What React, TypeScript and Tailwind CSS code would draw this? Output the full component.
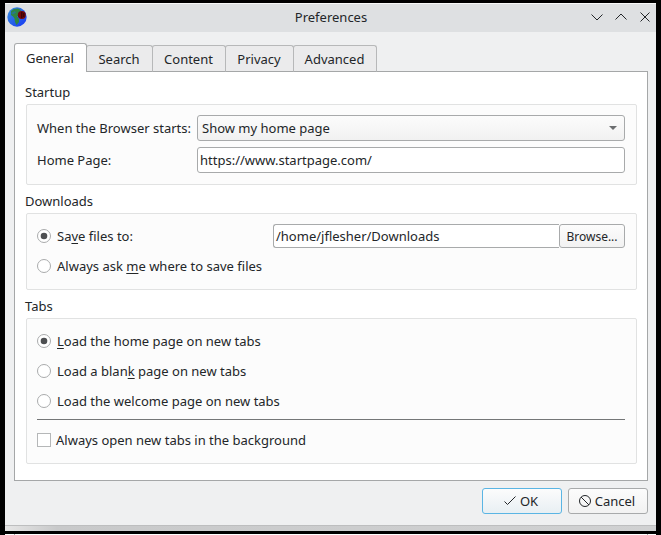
import type { ReactNode } from 'react';

const tabs = [
  { label: 'Search', width: 'w-[67px]' },
  { label: 'Content', width: 'w-[74px]' },
  { label: 'Privacy', width: 'w-[69px]' },
  { label: 'Advanced', width: 'w-[84px]' },
];

function Key({ children }: { children: string }) {
  return (
    <span className="underline decoration-[#232627] decoration-1 underline-offset-2 [text-decoration-skip-ink:none]">
      {children}
    </span>
  );
}

function Group({ title, height, gap, children }: { title: string; height: string; gap: string; children: ReactNode }) {
  return (
    <section className={gap}>
      <h2 className="-ml-px h-[22px] leading-5">{title}</h2>
      <div className={`${height} rounded-[2px] border border-[#e1e2e2] bg-[#fcfcfc] px-2.5`}>{children}</div>
    </section>
  );
}

function Radio({ checked, children }: { checked?: boolean; children: ReactNode }) {
  return (
    <label className="flex h-[30px] items-center">
      <svg className="mr-1.5 shrink-0" width="14" height="14" viewBox="0 0 14 14">
        <circle cx="7" cy="7" r="6.5" fill="#fff" stroke="#a9abac" />
        {checked && <circle cx="7" cy="7" r="3.3" fill="#4d4f51" />}
      </svg>
      <span>{children}</span>
    </label>
  );
}

function Globe() {
  return (
    <svg width="20" height="20" viewBox="0 0 20 20">
      <defs>
        <linearGradient id="sea" x1="0" y1="0" x2="1" y2="1">
          <stop offset="0" stopColor="#3791e0" />
          <stop offset="1" stopColor="#1636f4" />
        </linearGradient>
      </defs>
      <circle cx="10" cy="10" r="9.7" fill="url(#sea)" />
      <path d="M4 4 L7 2 L11 1.5 L14 3 L13 5 L11 6 L12 8 L10 9.5 L12 12 L12 15 L9.5 18 L8 15 L7.5 11.5 L6 9.5 L4 8 Z" fill="#2f8544" />
      <path d="M4 6 L8 4 L9 5.5 L6 7.5 Z" fill="#287a8a" />
      <circle cx="14.8" cy="8" r="4" fill="#76070b" />
      <path d="M14.8 5 V11 M16.8 6 V10" stroke="#320206" strokeWidth="1.2" />
    </svg>
  );
}

export default function App() {
  return (
    <div className="h-[535px] w-[661px] overflow-hidden bg-black pt-[3px] pr-[5px] pl-[5px] font-['Noto_Sans',sans-serif] text-[13px] leading-5 text-[#232629]">
      <div className="flex h-[528px] flex-col bg-[#eff0f1]">
        <header className="flex h-[29px] shrink-0 items-center border-t border-[#f8f8f8] bg-[#dee0e2] pb-0.5">
          <div className="ml-0.5 w-[72px]"><Globe /></div>
          <h1 className="flex-1 text-center">Preferences</h1>
          <div className="flex w-[73px] justify-end gap-3 pr-[5px]">
            <svg width="12" height="12" viewBox="0 0 12 12" fill="none" stroke="#232629"><path d="M.5 3.5 6 9l5.5-5.5" /></svg>
            <svg width="12" height="12" viewBox="0 0 12 12" fill="none" stroke="#232629"><path d="M.5 8.5 6 3l5.5 5.5" /></svg>
            <svg width="12" height="12" viewBox="0 0 12 12" fill="none" stroke="#232629"><path d="m1.5 1.5 9 9m0-9-9 9" /></svg>
          </div>
        </header>

        <main className="pt-[11px] pr-2 pl-[9px]">
          <nav className="relative z-10 -mb-px flex h-[29px] items-end">
            <button className="relative z-10 h-[29px] w-[73px] rounded-t-[3px] border border-b-0 border-[#a8aaab] bg-white pr-px">General</button>
            {tabs.map((tab) => (
              <button key={tab.label} className={`${tab.width} -ml-px h-[27px] rounded-t-[3px] border border-[#b7b8b9] border-b-[#a5a7a8] bg-[#ebebec] pt-px pr-px`}>
                {tab.label}
              </button>
            ))}
          </nav>
          <div className="h-[410px] border border-[#a5a7a8] bg-white pt-2.5 pr-2.5 pl-[11px]">
            <Group title="Startup" height="h-[81px]" gap="">
              <div className="mt-2.5 flex h-[26px] items-center">
                <span className="w-40">When the Browser starts:</span>
                <div className="flex h-[26px] flex-1 items-center justify-between rounded-[3px] border border-[#a8aaab] bg-linear-to-b from-[#fcfcfc] to-[#f1f1f1] pr-[7px] pl-1">
                  <span>Show my home page</span>
                  <svg width="8" height="4" viewBox="0 0 8 4"><path d="M0 0h8L4 4z" fill="#6b6d6f" /></svg>
                </div>
                <span className="w-px" />
              </div>
              <div className="mt-1.5 flex h-[26px] items-center">
                <span className="w-40">Home Page:</span>
                <div className="flex h-[26px] flex-1 items-center rounded-[3px] border border-[#a8aaab] bg-white pl-0.5">https://www.startpage.com/</div>
                <span className="w-px" />
              </div>
            </Group>

            <Group title="Downloads" height="h-[77px]" gap="mt-1.5">
              <div className="mt-[7px] flex h-[30px] items-center">
                <div className="w-[236px]"><Radio checked>Sa<Key>v</Key>e files to:</Radio></div>
                <div className="flex h-6 flex-1 items-center rounded-l-[3px] border border-r-0 border-[#a8aaab] bg-white pl-0.5">/home/jflesher/Downloads</div>
                <button className="mr-px h-6 w-[66px] rounded-[3px] border border-[#a8aaab] bg-linear-to-b from-[#fcfcfc] to-[#f2f2f2] pt-px text-[12px] leading-5">Browse...</button>
              </div>
              <Radio>Always ask <Key>m</Key>e where to save files</Radio>
            </Group>

            <Group title="Tabs" height="h-[146px]" gap="mt-1.5">
              <div className="pt-[7px]">
                <Radio checked><Key>L</Key>oad the home page on new tabs</Radio>
                <Radio>Load a blan<Key>k</Key> page on new tabs</Radio>
                <Radio>Load the welcome page on new tabs</Radio>
              </div>
              <hr className="mt-[3px] mr-px border-[#747677]" />
              <label className="mt-2.5 flex h-5 items-center">
                <span className="mr-[5px] size-3.5 border border-[#b5b7b8] bg-white" />
                <span>Always open new tabs in the background</span>
              </label>
            </Group>
          </div>
        </main>

        <footer className="mt-[7px] flex h-[26px] justify-end gap-1.5 pr-2">
          <button className="flex h-[26px] w-20 items-center justify-center gap-1 rounded-[3px] border border-[#5ab5e4] bg-linear-to-b from-[#fcfcfc] to-[#e8eff3] pr-0.5">
            <svg width="12" height="12" viewBox="0 0 12 12" fill="none" stroke="#232629"><path d="m.5 6.5 3 3 8-8" /></svg>
            <span>OK</span>
          </button>
          <button className="flex h-[26px] w-20 items-center justify-center gap-1 rounded-[3px] border border-[#a8aaab] bg-linear-to-b from-[#fcfcfc] to-[#f2f2f2] pr-0.5">
            <svg width="12" height="12" viewBox="0 0 12 12" fill="none" stroke="#232629"><circle cx="6" cy="6" r="5.5" /><path d="m2 2 8 8" /></svg>
            <span>Cancel</span>
          </button>
        </footer>
        <div className="mt-auto h-1.5 border-t border-[#bdbebf] bg-linear-to-r from-[#e6e6e6] via-[#c8c9ca] via-8% to-[#d0d1d2]" />
      </div>
      <div className="mt-[3px] flex h-px bg-white">
        <span className="ml-[9px] w-px bg-[#a5a7a8]" />
        <span className="ml-[632px] w-px bg-[#a5a7a8]" />
      </div>
    </div>
  );
}
